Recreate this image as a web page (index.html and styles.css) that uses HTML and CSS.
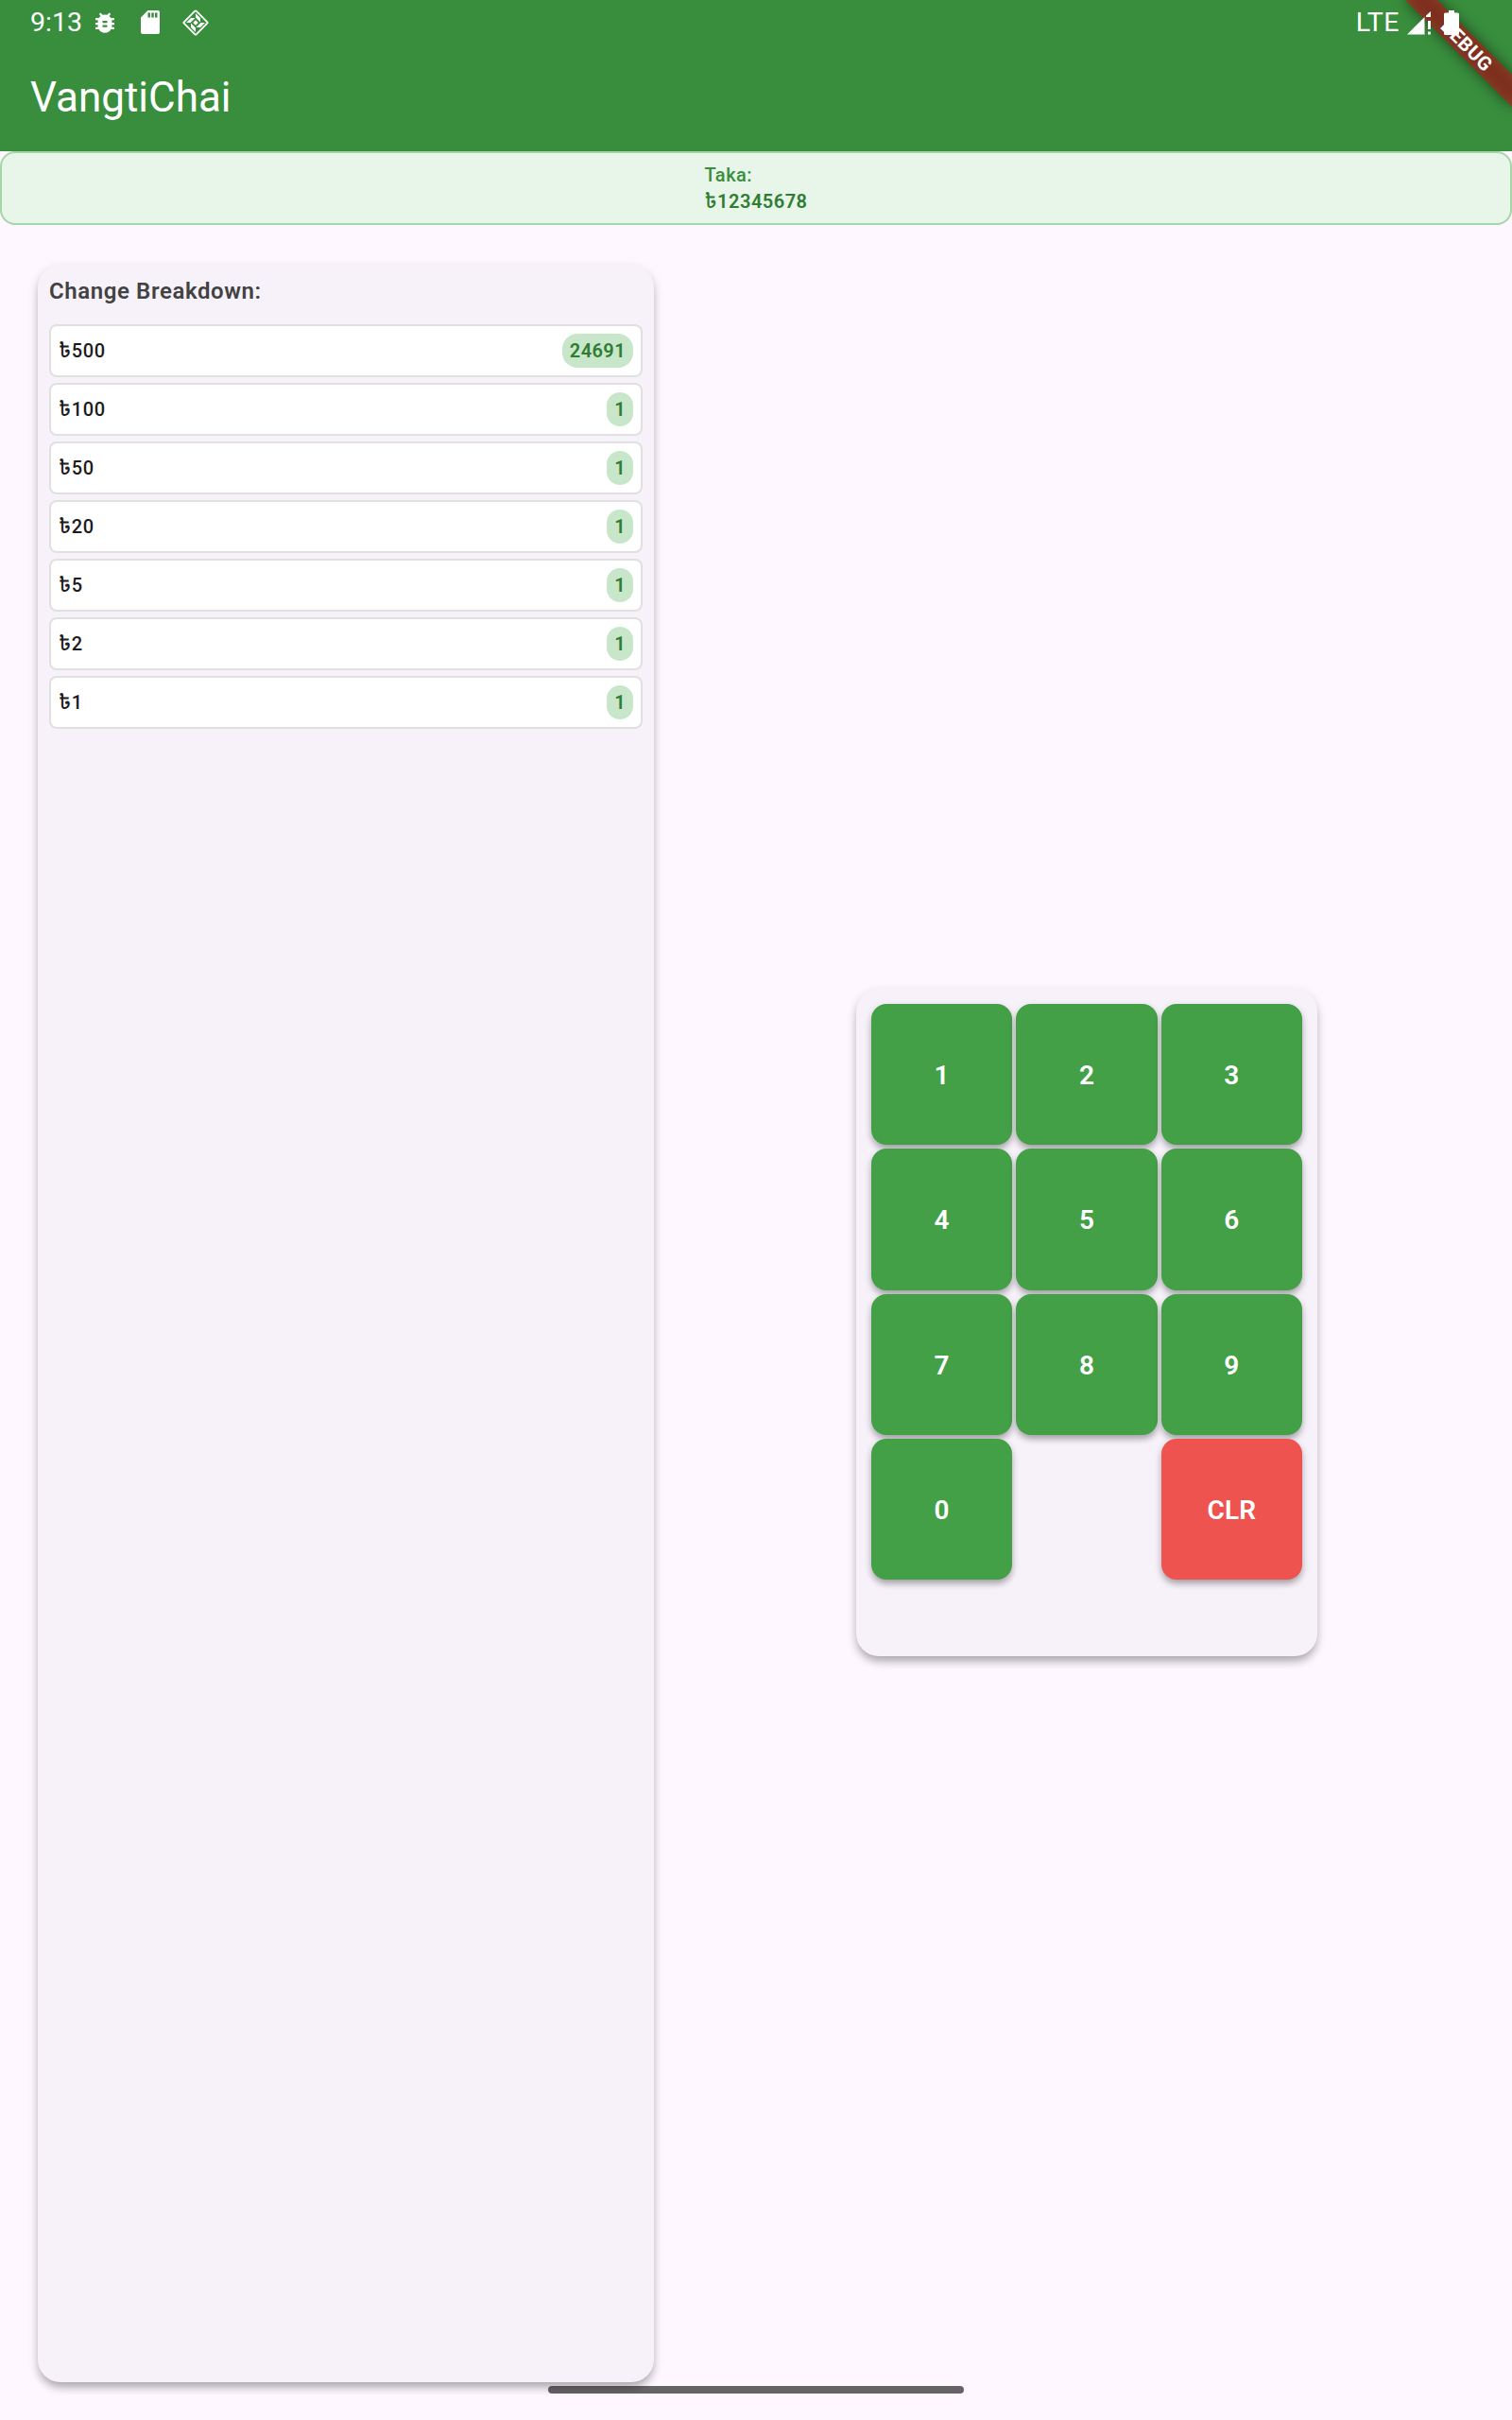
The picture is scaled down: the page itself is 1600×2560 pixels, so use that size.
FILE: index.html
```html
<!DOCTYPE html>
<html lang="en">
<head>
<meta charset="utf-8">
<title>VangtiChai</title>
<link rel="stylesheet" href="styles.css">
</head>
<body>
<header class="header">
  <div class="debug"><div class="debug-shadow"></div><div class="debug-band">DEBUG</div></div>
  <div class="status">
    <span class="clock">9:13</span>
    <svg class="bug" viewBox="0 0 20 22" width="20" height="22" fill="#fff"><path fill-rule="evenodd" d="M20 6h-3.600a7 7 0 0 0-1.900-2L16.200 2 14.600.4 12.200 2.800a8 8 0 0 0-4.400 0L5.400.4 3.800 2l1.700 2a7 7 0 0 0-1.900 2H0v2.300h2.600V11H0v2.300h2.600v2.400H0V18h3.600a7.300 7.300 0 0 0 12.800 0H20v-2.300h-2.600v-2.400H20V11h-2.600V8.300H20zM7.500 9h5v2.200h-5zM7.500 13.500h5v2.200h-5z"/></svg>
    <svg class="sd" viewBox="0 0 20 25" width="20" height="25" fill="#fff"><path fill-rule="evenodd" d="M7.500 0H18a2 2 0 0 1 2 2v21a2 2 0 0 1-2 2H2a2 2 0 0 1-2-2V7.500zM7.500 2.500V7.500H10V2.500zM11.300 2.500V7.500H13.800V2.500zM15 2.500V7.500H17.500V2.500z"/></svg>
    <svg class="gem" viewBox="0 0 28 28" width="28" height="28"><rect x="4.800" y="4.800" width="18.400" height="18.400" rx="1" transform="rotate(45 14 14)" fill="none" stroke="#fff" stroke-width="1.800"/><g fill="#fff"><path id="petal" d="M14 4v5h5zM19 9v4.500L14.500 9zM14 11.200l2.800 2.800H14z"/><use href="#petal" transform="rotate(90 14 14)"/><use href="#petal" transform="rotate(180 14 14)"/><use href="#petal" transform="rotate(270 14 14)"/></g></svg>
    <span class="network">LTE</span>
    <svg class="signal" viewBox="0 0 25 25" width="25" height="25" fill="#fff"><path d="M0 24.500 18.500 6v18.500zM20 4.500 25 0v6H20zM22 10h3v9h-3zM22 21.500h3v3h-3z"/></svg>
    <svg class="battery" viewBox="0 0 16 26" width="16" height="26" fill="#fff"><path d="M5 0h6v2.500h3.500A1.500 1.500 0 0 1 16 4v20.500a1.500 1.500 0 0 1-1.500 1.500h-13A1.500 1.500 0 0 1 0 24.500V4a1.500 1.500 0 0 1 1.500-1.500H5z"/></svg>
  </div>
  <h1 class="title">VangtiChai</h1>
</header>
<section class="amount">
  <div class="amount-text"><div class="label">Taka:</div><div class="value"><span class="taka">৳</span>12345678</div></div>
</section>
<main class="content">
  <section class="breakdown">
    <h2 class="heading">Change Breakdown:</h2>
    <ul class="notes">
      <li class="note"><span><span class="taka">৳</span>500</span><b class="count">24691</b></li>
      <li class="note"><span><span class="taka">৳</span>100</span><b class="count">1</b></li>
      <li class="note"><span><span class="taka">৳</span>50</span><b class="count">1</b></li>
      <li class="note"><span><span class="taka">৳</span>20</span><b class="count">1</b></li>
      <li class="note"><span><span class="taka">৳</span>5</span><b class="count">1</b></li>
      <li class="note"><span><span class="taka">৳</span>2</span><b class="count">1</b></li>
      <li class="note"><span><span class="taka">৳</span>1</span><b class="count">1</b></li>
    </ul>
  </section>
  <section class="pad-area">
    <div class="pad">
      <button class="key">1</button><button class="key">2</button><button class="key">3</button>
      <button class="key">4</button><button class="key">5</button><button class="key">6</button>
      <button class="key">7</button><button class="key">8</button><button class="key">9</button>
      <button class="key">0</button><span></span><button class="key clear">CLR</button>
    </div>
  </section>
</main>
<div class="gesture"></div>
</body>
</html>
```
FILE: styles.css
```css
* { box-sizing: border-box; }
body { margin: 0; height: 2560px; display: flex; flex-direction: column; position: relative; overflow: hidden; background: #fef7ff; color: #1d1b20; font-family: Roboto, "Noto Sans Bengali", "Noto Sans", sans-serif; }
.header { position: relative; height: 160px; flex: none; overflow: hidden; background: #388e3c; color: #fff; }
.status { position: relative; display: flex; align-items: flex-start; height: 48px; padding: 0 56px 0 32px; }
.clock, .network { font-size: 28.5px; line-height: 48px; }
.clock { width: 69px; }
.bug { margin-top: 13px; }
.sd { margin: 11px 0 0 28px; }
.gem { margin: 10px 0 0 24px; }
.network { margin-left: auto; letter-spacing: .5px; }
.signal { margin: 12px 0 0 8px; }
.battery { margin: 11px 0 0 14px; }
.title { margin: 0; padding-left: 32px; font-size: 44px; line-height: 56px; margin-top: 27px; font-weight: 400; }
.debug { position: absolute; left: 1472px; top: 36px; width: 160px; height: 24px; transform: rotate(45deg); }
.debug-shadow, .debug-band { position: absolute; inset: 0; }
.debug-shadow { background: rgba(0,0,0,.5); filter: blur(7.4px); }
.debug-band { background: rgba(183,28,28,.627); text-align: center; font-size: 20.4px; line-height: 24px; font-weight: 700; letter-spacing: .5px; }
.amount { height: 78px; flex: none; display: flex; justify-content: center; padding-top: 9px; background: #e8f5e9; border: 2px solid #a5d6a7; border-radius: 16px; }
.amount-text { font-size: 20px; line-height: 28px; letter-spacing: .5px; }
.label { color: #388e3c; font-weight: 500; }
.value { color: #2e7d32; font-weight: 600; }
.taka { font-size: 22px; font-weight: 500; line-height: 1; }
.content { flex: 1; display: flex; padding: 42px 0 40px 40px; }
.breakdown { width: 652px; padding: 0 12px; border-radius: 24px; background: #f7f2fa; box-shadow: 0 7px 10px -2px rgba(0,0,0,.24), 0 4px 12px rgba(0,0,0,.14); }
.heading { margin: 0; height: 63px; padding-top: 12px; font-size: 24px; line-height: 32px; letter-spacing: .6px; font-weight: 600; color: #424242; }
.notes { display: grid; gap: 6px; margin: 0; padding: 0; list-style: none; }
.note { display: flex; align-items: center; justify-content: space-between; height: 56px; padding: 0 8px; border: 2px solid #e0e0e0; border-radius: 8px; background: #fff; font-size: 20px; font-weight: 500; letter-spacing: .6px; }
.count { padding: 1px 8px 0; border-radius: 16px; background: #c8e6c9; color: #2e7d32; line-height: 35px; font-weight: 600; letter-spacing: .4px; }
.pad-area { flex: 1; display: flex; align-items: center; justify-content: center; padding: 0 0 2px 8px; }
.pad { display: grid; grid-template-columns: repeat(3, 1fr); grid-auto-rows: 149.33px; gap: 4px; width: 488px; height: 706px; padding: 16px; border-radius: 24px; background: #f7f2fa; box-shadow: 0 7px 10px -2px rgba(0,0,0,.24), 0 4px 12px rgba(0,0,0,.14); }
.key { padding: 2px 0 0; border: 0; border-radius: 16px; background: #43a047; color: #fff; font: 600 28px Roboto, sans-serif; letter-spacing: .2px; box-shadow: 0 5px 7px -1px rgba(0,0,0,.26), 0 3px 8px rgba(0,0,0,.14); }
.clear { background: #ef5350; }
.gesture { position: absolute; left: 580px; top: 2524px; width: 440px; height: 8px; border-radius: 4px; background: rgba(0,0,0,.6); }
```
